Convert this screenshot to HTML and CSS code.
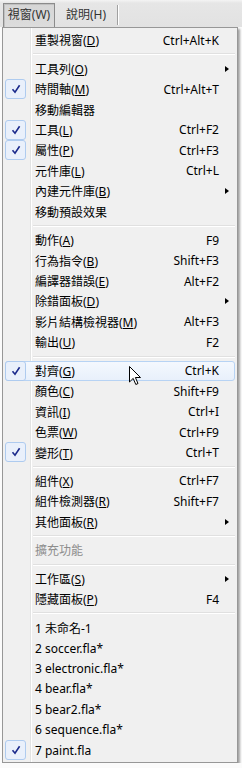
FILE: index.html
```html
<!DOCTYPE html>
<html lang="zh-Hant">
	<head>
		<meta charset="UTF-8" />
		<title>視窗選單</title>
		<link rel="stylesheet" href="styles.css">
	</head>
	<body>
		<div class="menubar">
			<div class="bar-item pressed">視窗(W)</div>
			<div class="bar-item">說明(H)</div>
			<div class="bar-sep"></div>
		</div>

		<div class="menu">
			<div class="item"><span class="label">重製視窗(<u>D</u>)</span><span class="key">Ctrl+Alt+K</span></div>
			<div class="sep"></div>
			<div class="item sub"><span class="label">工具列(<u>O</u>)</span></div>
			<div class="item checked"><span class="label">時間軸(<u>M</u>)</span><span class="key">Ctrl+Alt+T</span></div>
			<div class="item"><span class="label">移動編輯器</span></div>
			<div class="item checked"><span class="label">工具(<u>L</u>)</span><span class="key">Ctrl+F2</span></div>
			<div class="item checked"><span class="label">屬性(<u>P</u>)</span><span class="key">Ctrl+F3</span></div>
			<div class="item"><span class="label">元件庫(<u>L</u>)</span><span class="key">Ctrl+L</span></div>
			<div class="item sub"><span class="label">內建元件庫(<u>B</u>)</span></div>
			<div class="item"><span class="label">移動預設效果</span></div>
			<div class="sep"></div>
			<div class="item"><span class="label">動作(<u>A</u>)</span><span class="key">F9</span></div>
			<div class="item"><span class="label">行為指令(<u>B</u>)</span><span class="key">Shift+F3</span></div>
			<div class="item"><span class="label">編譯器錯誤(<u>E</u>)</span><span class="key">Alt+F2</span></div>
			<div class="item sub"><span class="label">除錯面板(<u>D</u>)</span></div>
			<div class="item"><span class="label">影片結構檢視器(<u>M</u>)</span><span class="key">Alt+F3</span></div>
			<div class="item"><span class="label">輸出(<u>U</u>)</span><span class="key">F2</span></div>
			<div class="sep"></div>
			<div class="item checked hover"><span class="label">對齊(<u>G</u>)</span><span class="key">Ctrl+K</span>
				<svg class="cursor" width="12" height="20" viewBox="0 0 12 20">
					<path d="M0.5 0.5 L0.5 16 L4.2 12.4 L6.8 18.5 L9 17.5 L6.4 11.5 L11.5 11.5 Z" fill="#fff" stroke="#000" stroke-width="1" stroke-linejoin="miter"/>
				</svg>
			</div>
			<div class="item"><span class="label">顏色(<u>C</u>)</span><span class="key">Shift+F9</span></div>
			<div class="item"><span class="label">資訊(<u>I</u>)</span><span class="key">Ctrl+I</span></div>
			<div class="item"><span class="label">色票(<u>W</u>)</span><span class="key">Ctrl+F9</span></div>
			<div class="item checked"><span class="label">變形(<u>T</u>)</span><span class="key">Ctrl+T</span></div>
			<div class="sep"></div>
			<div class="item"><span class="label">組件(<u>X</u>)</span><span class="key">Ctrl+F7</span></div>
			<div class="item"><span class="label">組件檢測器(<u>R</u>)</span><span class="key">Shift+F7</span></div>
			<div class="item sub"><span class="label">其他面板(<u>R</u>)</span></div>
			<div class="sep"></div>
			<div class="item disabled"><span class="label">擴充功能</span></div>
			<div class="sep"></div>
			<div class="item sub"><span class="label">工作區(<u>S</u>)</span></div>
			<div class="item"><span class="label">隱藏面板(<u>P</u>)</span><span class="key">F4</span></div>
			<div class="sep"></div>
			<div class="item"><span class="label">1 未命名-1</span></div>
			<div class="item"><span class="label">2 soccer.fla*</span></div>
			<div class="item"><span class="label">3 electronic.fla*</span></div>
			<div class="item"><span class="label">4 bear.fla*</span></div>
			<div class="item"><span class="label">5 bear2.fla*</span></div>
			<div class="item"><span class="label">6 sequence.fla*</span></div>
			<div class="item checked"><span class="label">7 paint.fla</span></div>
		</div>
	</body>
</html>
```

FILE: styles.css
```css
:root {
	--menu-bg: #f0f0f0;
	--border: #979797;
	--check: #1b2a8c;
	--disabled: #8d8d8d;
}

body {
	margin: 0;
	padding: 0;
	background: #fbfbfb;
	font-family: "Noto Sans", "Noto Sans CJK TC", sans-serif;
	font-size: 12px;
	color: #000;
}

.menubar {
	height: 27px;
	display: flex;
	align-items: flex-end;
	background: linear-gradient(#f4f4f4 0, #e6e6e6 3px, #e2e2e2 100%);
}

.bar-item {
	height: 24px;
	line-height: 22px;
	padding: 0 6px;
	margin-left: 3px;
	color: #333;
	box-sizing: border-box;
	border: 1px solid transparent;
}

.bar-item.pressed {
	width: 52px;
	text-align: center;
	padding: 0;
	border-color: #8b8b8b;
	border-bottom: none;
	background: linear-gradient(#d6d6d6, #dcdcdc);
	box-shadow: inset 1px 1px 0 #c0c0c0;
}

.bar-item + .bar-item {
	margin-left: 4px;
	padding: 0 6px;
}

.bar-sep {
	width: 1px;
	height: 20px;
	margin: 0 0 2px 4px;
	background: #a0a0a0;
	box-shadow: 1px 0 0 #fff;
}

.menu {
	position: relative;
	width: 236px;
	margin-left: 2px;
	box-sizing: border-box;
	padding: 2px;
	border: 1px solid var(--border);
	background-color: var(--menu-bg);
	background-image: linear-gradient(to right, transparent 27px, #e2e3e3 27px, #e2e3e3 28px, #ffffff 28px, #ffffff 29px, transparent 29px);
	box-shadow: 2px 2px 2px rgba(0, 0, 0, 0.35);
}

.item {
	position: relative;
	height: 20.45px;
	display: grid;
	grid-template-columns: 30px 1fr auto 16px;
	align-items: center;
	white-space: nowrap;
}

.label {
	grid-column: 2;
}

.key {
	grid-column: 3;
	text-align: right;
}

.item.sub::after {
	content: "";
	grid-column: 4;
	justify-self: center;
	width: 0;
	height: 0;
	border-top: 3.5px solid transparent;
	border-bottom: 3.5px solid transparent;
	border-left: 4px solid #000;
}

.item.checked::before {
	content: "";
	position: absolute;
	left: 0;
	top: 0;
	width: 21px;
	height: 20px;
	box-sizing: border-box;
	border: 1px solid #aecbef;
	border-radius: 3px;
	background: #e9f0fb url("data:image/svg+xml;utf8,<svg xmlns='http://www.w3.org/2000/svg' width='10' height='10' viewBox='0 0 10 10'><path d='M1.5 5.2 L4 8.2 L8.6 1.2' fill='none' stroke='%231b2a8c' stroke-width='1.6'/></svg>") center / 10px 10px no-repeat;
}

.item.hover {
	border: 1px solid #b7d3f4;
	border-radius: 3px;
	margin-top: 0;
	box-sizing: border-box;
	background: linear-gradient(#f4f8fe, #e8f0fb);
	grid-template-columns: 29px 1fr auto 15px;
}

.item.hover::before {
	left: -1px;
	top: -1px;
}

.item.disabled {
	color: var(--disabled);
}

.sep {
	height: 1px;
	margin: 3px 0 3px 28px;
	background: #e0e0e0;
	border-bottom: 1px solid #fff;
}

.cursor {
	position: absolute;
	left: 123px;
	top: 4px;
}
```
